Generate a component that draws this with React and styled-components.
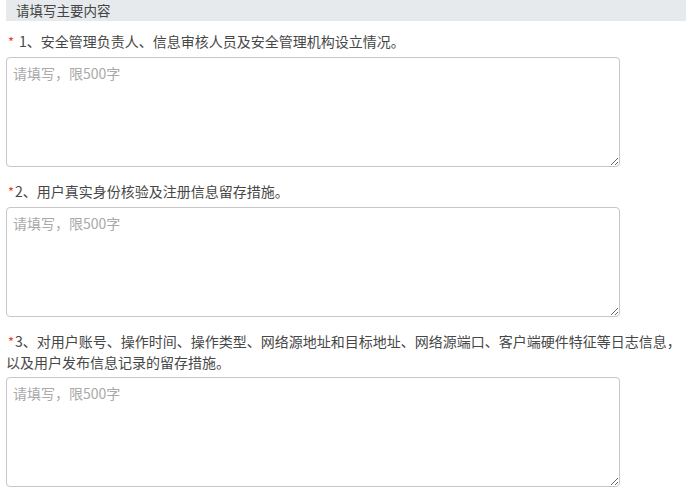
import React from 'react';
import styled, { createGlobalStyle } from 'styled-components';

const GlobalStyle = createGlobalStyle`
  html, body {
    margin: 0;
    padding: 0;
    background: #fff;
  }
  body {
    font-family: "Noto Sans CJK SC", "Microsoft YaHei", sans-serif;
  }
`;

const Wrapper = styled.div`
  width: 680px;
  padding: 0 6px;
`;

const Header = styled.div`
  height: 21px;
  line-height: 21px;
  background: #e6eaed;
  color: #444;
  font-size: 13.5px;
  padding-left: 10px;
`;

const Item = styled.div`
  display: flex;
  flex-direction: column;
  margin-top: ${props => props.first ? '10px' : '14px'};
`;

const Label = styled.div`
  font-size: 14px;
  line-height: 20px;
  color: #474747;
  margin-bottom: 5px;
  padding-right: 4px;
`;

const Star = styled.span`
  display: inline-block;
  color: #f03c2a;
  font-size: 13px;
  margin-left: 2px;
  margin-right: ${props => props.spaced ? '5px' : '1px'};
`;

const TextArea = styled.textarea`
  box-sizing: border-box;
  width: 614px;
  height: 110px;
  border: 1px solid #c6c6c6;
  border-radius: 4px;
  padding: 5px 6px;
  font-family: "Noto Sans CJK SC", "Microsoft YaHei", sans-serif;
  font-size: 14px;
  line-height: 20px;
  color: #333;
  outline: none;

  &::placeholder {
    color: #a9a9a9;
  }
`;

const items = [
  { spaced: true, text: '1、安全管理负责人、信息审核人员及安全管理机构设立情况。' },
  { spaced: false, text: '2、用户真实身份核验及注册信息留存措施。' },
  { spaced: false, text: '3、对用户账号、操作时间、操作类型、网络源地址和目标地址、网络源端口、客户端硬件特征等日志信息，以及用户发布信息记录的留存措施。' },
];

export default function App() {
  return (
    <Wrapper>
      <GlobalStyle />
      <Header>请填写主要内容</Header>
      {items.map((item, i) => (
        <Item key={i} first={i === 0}>
          <Label>
            <Star spaced={item.spaced}>*</Star>
            {item.text}
          </Label>
          <TextArea placeholder="请填写，限500字" />
        </Item>
      ))}
    </Wrapper>
  );
}
